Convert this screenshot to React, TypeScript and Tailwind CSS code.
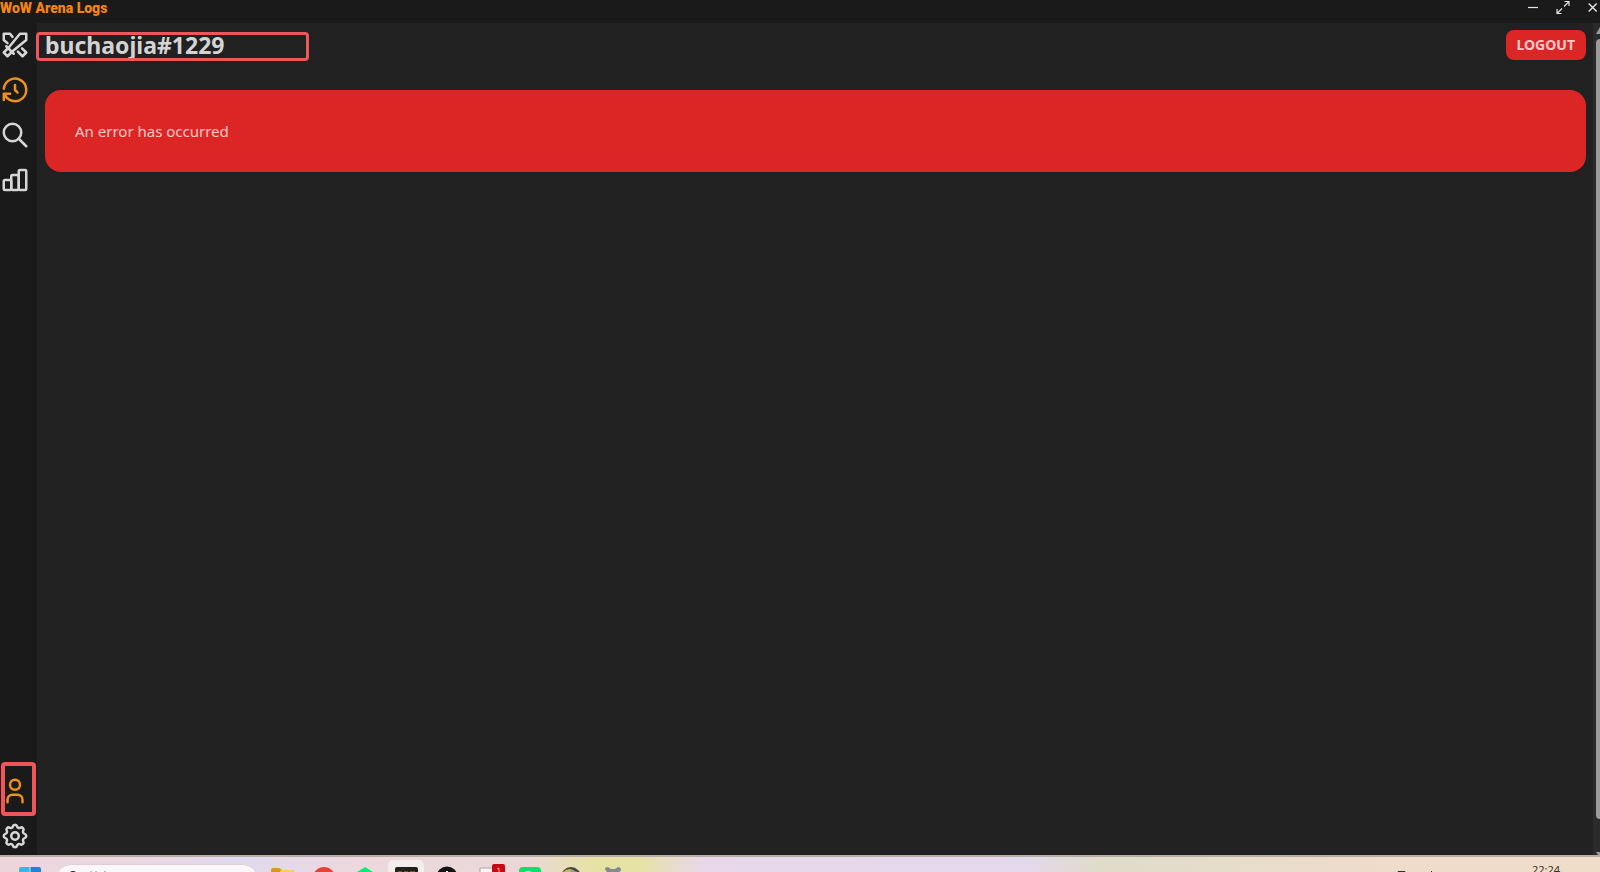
import type { ReactNode } from 'react';

function NavButton({ label, active, children }: { label: string; active?: boolean; children: ReactNode }) {
  return (
    <button
      type="button"
      aria-label={label}
      className={active ? 'block text-[#ee901f]' : 'block text-[#d6d6d6]'}
    >
      <svg
        viewBox="0 0 24 24"
        className="size-[30px]"
        fill="none"
        stroke="currentColor"
        strokeWidth="2"
        strokeLinecap="round"
        strokeLinejoin="round"
        aria-hidden="true"
      >
        {children}
      </svg>
    </button>
  );
}

function TitleBar() {
  return (
    <header className="flex h-[23px] shrink-0 items-start justify-between bg-[#1a1a1a]">
      <div className="font-['Impact','Roboto',sans-serif] text-[14px] font-black leading-4 text-[#f58410]">
        WoW Arena Logs
      </div>
      <div className="flex gap-4 text-[#e4e4e4]">
        <button type="button" aria-label="Minimize">
          <svg viewBox="0 0 14 15" className="h-[15px] w-3.5" stroke="currentColor" strokeWidth="1.2">
            <path d="M2 7.5h10" />
          </svg>
        </button>
        <button type="button" aria-label="Maximize">
          <svg viewBox="0 0 14 15" className="h-[15px] w-3.5" fill="none" stroke="currentColor" strokeWidth="1.2">
            <path d="M8 6.5l5-5M8.5 1.5H13V6M6 8.5l-5 5M1 9v4.5h4.5" />
          </svg>
        </button>
        <button type="button" aria-label="Close">
          <svg viewBox="0 0 14 15" className="h-[15px] w-3.5" fill="none" stroke="currentColor" strokeWidth="1.4">
            <path d="M2.7 3.5l8 8M10.7 3.5l-8 8" />
          </svg>
        </button>
      </div>
    </header>
  );
}

function Sidebar() {
  return (
    <nav className="flex w-[37px] shrink-0 flex-col justify-between bg-[#1a1a1a] pb-1 pt-[7px]">
      <div className="flex flex-col gap-[15px]">
        <NavButton label="Arena">
          <path d="M21 3v5l-11 9-4 4-3-3 4-4 9-11z" />
          <path d="M5 13l6 6" />
          <path d="M14.32 17.32L18 21l3-3-3.365-3.365" />
          <path d="M10 5.5L8 3H3v5l3 2.5" />
        </NavButton>
        <NavButton label="History" active>
          <path d="M12 8v4l2 2" />
          <path d="M3.05 11a9 9 0 1 1 .5 4m-.5 5v-5h5" />
        </NavButton>
        <NavButton label="Search">
          <circle cx="10" cy="10" r="7" />
          <path d="M21 21l-6-6" />
        </NavButton>
        <NavButton label="Statistics">
          <rect x="3" y="12" width="6" height="8" rx="1" />
          <rect x="9" y="8" width="6" height="12" rx="1" />
          <rect x="15" y="4" width="6" height="16" rx="1" />
        </NavButton>
      </div>
      <div className="flex flex-col">
        <div className="ml-px flex h-[54px] w-[35px] items-center rounded-sm border-4 border-[#f05558]">
          <div className="-ml-[5px] pt-1">
            <NavButton label="Account" active>
              <circle cx="12" cy="7" r="4" />
              <path d="M6 21v-2a4 4 0 0 1 4-4h4a4 4 0 0 1 4 4v2" />
            </NavButton>
          </div>
        </div>
        <div className="pt-[5px]">
          <NavButton label="Settings">
            <path d="M10.325 4.317c.426-1.756 2.924-1.756 3.35 0a1.724 1.724 0 0 0 2.573 1.066c1.543-.94 3.31.826 2.37 2.37a1.724 1.724 0 0 0 1.065 2.572c1.756.426 1.756 2.924 0 3.35a1.724 1.724 0 0 0-1.066 2.573c.94 1.543-.826 3.31-2.37 2.37a1.724 1.724 0 0 0-2.572 1.065c-.426 1.756-2.924 1.756-3.35 0a1.724 1.724 0 0 0-2.573-1.066c-1.543.94-3.31-.826-2.37-2.37a1.724 1.724 0 0 0-1.065-2.572c-1.756-.426-1.756-2.924 0-3.35a1.724 1.724 0 0 0 1.066-2.573c-.94-1.543.826-3.31 2.37-2.37 1 .608 2.296.07 2.572-1.065z" />
            <circle cx="12" cy="12" r="3" />
          </NavButton>
        </div>
      </div>
    </nav>
  );
}

function Taskbar() {
  return (
    <footer className="flex h-[17px] shrink-0 items-start justify-between overflow-hidden border-t-2 border-[#b9aaa6] bg-[linear-gradient(90deg,#ecd6dc_0%,#ead8e2_9%,#e0d9ef_15%,#ecd8de_22%,#ead8d8_33%,#e6e2a6_37%,#e6e2a6_40%,#e8d7ea_44%,#e4d8ec_64%,#dfdcc9_69%,#efdccb_86%,#efddca_100%)]">
      <div className="flex items-start">
        <svg viewBox="0 0 22 22" className="ml-[19px] mt-2.5 size-[22px]" fill="#1687d9" aria-hidden="true">
          <path d="M0 2q0-2 2-2h8.500v10.500H0z" fill="#35b8f0" />
          <path d="M11.500 0H20q2 0 2 2v8.500H11.500z" />
        </svg>
        <div className="ml-[14px] mt-[7px] flex h-8 w-[204px] items-start rounded-2xl border border-[#ddd0d8] bg-[#faf6f9] pl-3 pt-1.5">
          <svg viewBox="0 0 44 12" className="h-3 w-11" fill="none" stroke="#25222b" strokeWidth="2" aria-hidden="true">
            <circle cx="5" cy="5" r="4" />
            <path d="M23 0v3M28 0v3M37 0v3" stroke="#8d8790" strokeWidth="1" />
          </svg>
        </div>
        <svg viewBox="0 0 364 32" className="ml-[7px] h-8 w-[364px]" aria-hidden="true">
          <path d="M5 13q0-2 2-2h6l3 2h10q2 0 2 2v17H5z" fill="#d99a18" />
          <path d="M14 15q0-2 2-2h10q2 0 2 2v17H5V17h9z" fill="#ffcf55" />
          <circle cx="58" cy="21" r="11" fill="#e64236" />
          <path d="M99 10l8 5v15H91V15z" fill="#08ee72" />
          <path d="M122 9q0-6 5-6h26q5 0 5 6v23h-36z" fill="#f4edec" />
          <rect x="129" y="10" width="23" height="22" rx="2" fill="#24201d" />
          <path d="M132 15h4M138 15h4M144 15h5" stroke="#c28b40" strokeWidth="1" />
          <circle cx="181" cy="20" r="10.500" fill="#151314" />
          <path d="M181 14v4" stroke="#fff" strokeWidth="2" />
          <path d="M214 11h14v21h-14z" fill="#f9f4f3" stroke="#aaa" />
          <rect x="226" y="7" width="13" height="13" rx="2" fill="#c90813" />
          <path d="M231 12l2-1v6" stroke="#f3a0a0" fill="none" />
          <rect x="253" y="10" width="22" height="20" rx="4" fill="#0be16b" />
          <ellipse cx="262" cy="18" rx="5" ry="4" fill="#edfff3" />
          <circle cx="305" cy="20" r="10" fill="#494539" />
          <path d="M297 15q7-6 13 0l-10 3z" fill="#c9b66a" />
          <path d="M304 13l8 2-3 5z" fill="#7e9caf" />
          <path d="M339 12q0-2 3-2l3 2h4l3-2q3 0 3 3l-3 4v15h-10V17z" fill="#85888e" />
        </svg>
      </div>
      <div className="flex items-start font-['Noto_Sans',sans-serif] text-[11px] leading-3 text-[#36302c]">
        <svg viewBox="0 0 40 16" className="mr-[95px] mt-2 h-4 w-10" fill="none" stroke="currentColor" aria-hidden="true">
          <path d="M1 11V6.500h7V11M34.500 6v5" />
        </svg>
        <time className="mt-[7px]">22:24</time>
        <svg viewBox="0 0 12 16" className="ml-3 mr-4 mt-2 h-4 w-3" stroke="currentColor" aria-hidden="true">
          <path d="M1 7.500h4M7 7.500h4" />
        </svg>
      </div>
    </footer>
  );
}

export default function App() {
  return (
    <div className="flex h-screen flex-col overflow-hidden bg-[#212121] font-['Segoe_UI','Noto_Sans',sans-serif]">
      <TitleBar />
      <div className="flex min-h-0 flex-1">
        <Sidebar />
        <main className="flex min-w-0 flex-1 flex-col gap-[30px] pl-2 pr-[7px] pt-[7px]">
          <div className="flex items-center justify-between">
            <div className="relative w-[255px]">
              <h1 className="text-[23px] font-bold leading-[30px] text-[#d4d4d4]">buchaojia#1229</h1>
              <div className="absolute -left-[9px] top-[2px] h-[29px] w-[273px] rounded-sm border-[3px] border-[#f05558]" />
            </div>
            <button
              type="button"
              className="h-[30px] rounded-lg bg-[#dc2626] px-[11px] text-sm font-bold text-[#ffc9c9]"
            >
              LOGOUT
            </button>
          </div>
          <div role="alert" className="rounded-2xl bg-[#dc2626] px-[30px] py-[29px] text-[15px] leading-6 text-[#ffc9c9]">
            An error has occurred
          </div>
        </main>
        <div className="flex w-[7px] shrink-0 flex-col items-end bg-[#2b2b2b]" aria-hidden="true">
          <svg viewBox="0 0 4 12" className="h-3 w-1" fill="#9b9b9b">
            <path d="M4 4v7H0z" />
          </svg>
          <div className="mt-1 w-1 flex-1 rounded-l bg-[#9b9b9b]" />
          <svg viewBox="0 0 4 36" className="h-9 w-1" fill="#9b9b9b">
            <path d="M0 33h4v3H2z" />
          </svg>
        </div>
      </div>
      <Taskbar />
    </div>
  );
}
